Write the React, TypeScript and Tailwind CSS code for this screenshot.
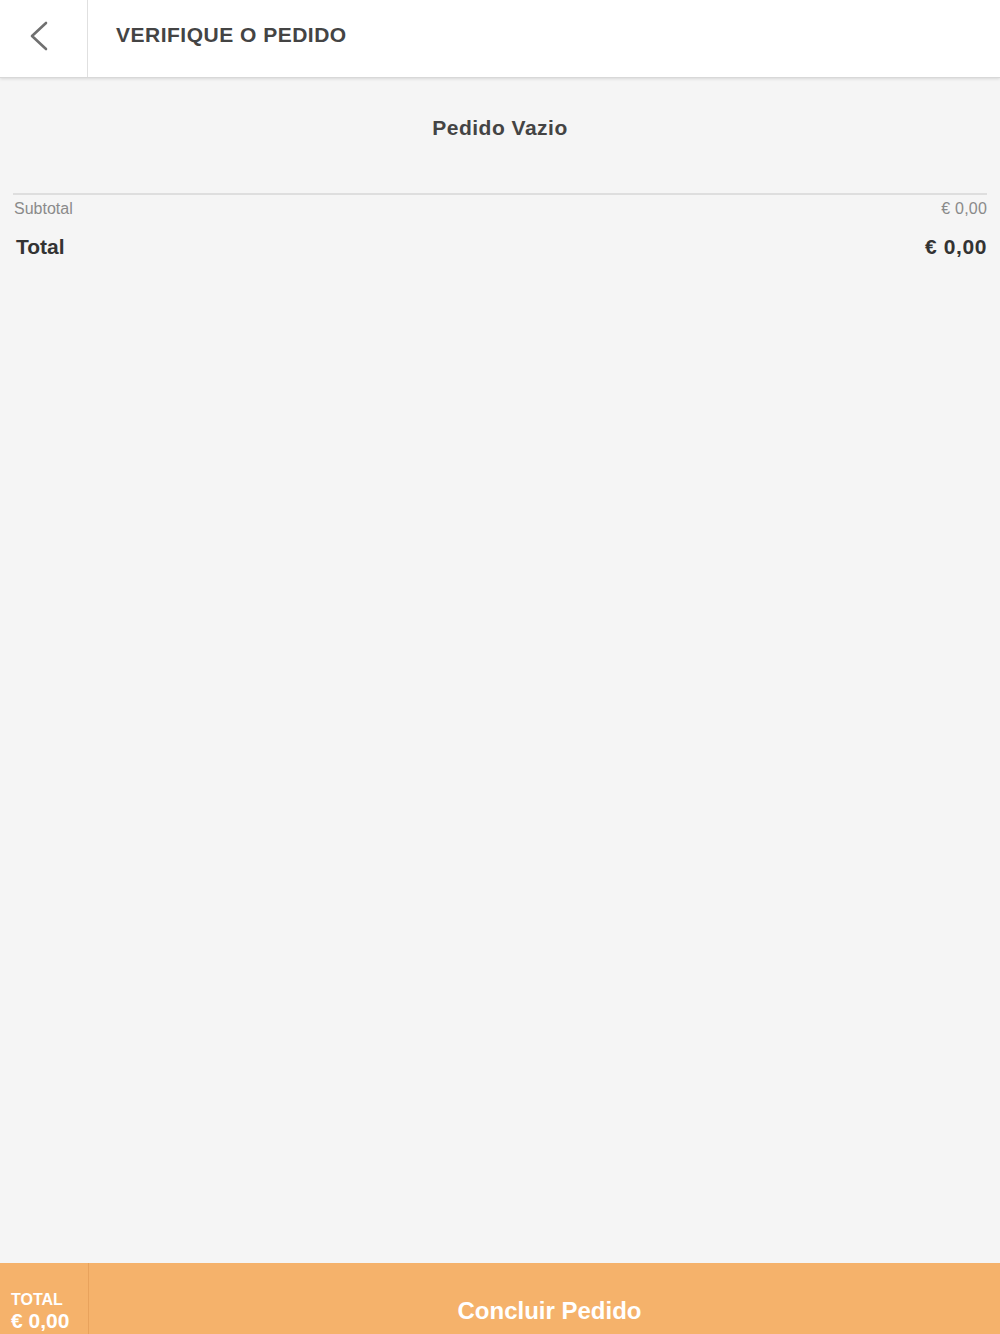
export default function App() {
  return (
    <div className="flex h-[1334px] flex-col bg-[#f5f5f5] font-['Liberation_Sans',Arial,sans-serif]">
      <header className="flex h-[78px] shrink-0 items-stretch border-b border-[#d8d8d8] bg-white shadow-[0_1px_3px_rgba(0,0,0,0.12)]">
        <button className="flex w-[88px] items-center justify-center border-r border-[#e0e0e0]" type="button">
          <svg width="22" height="32" viewBox="0 0 22 32" className="-ml-[10px] -mt-[6px]">
            <polyline points="18,3 4,16 18,29" fill="none" stroke="#707070" strokeWidth="2.6" strokeLinecap="round" strokeLinejoin="round" />
          </svg>
        </button>
        <h1 className="flex items-center pl-[28px] pb-[7px] text-[21px] font-bold tracking-[0.5px] text-[#444]">
          VERIFIQUE O PEDIDO
        </h1>
      </header>

      <main className="flex-1 px-[13px]">
        <p className="pt-[34px] text-center text-[21px] font-bold tracking-[0.5px] text-[#444]">Pedido Vazio</p>
        <div className="mt-[49px] border-t-2 border-[#dedede]" />
        <div className="flex justify-between pt-[4px] text-[16px] leading-[20px] text-[#8a8a8a]">
          <span className="pl-[1px]">Subtotal</span>
          <span className="tracking-[0.2px]">€ 0,00</span>
        </div>
        <div className="flex justify-between pt-[16px] text-[21px] font-bold leading-[24px] text-[#333]">
          <span className="pl-[3px]">Total</span>
          <span className="tracking-[0.6px]">€ 0,00</span>
        </div>
      </main>

      <footer className="flex h-[71px] shrink-0 bg-[#f5b26b] text-white">
        <div className="flex w-[89px] flex-col justify-end border-r border-[#e8a25c] pb-[1px] pl-[11px] font-bold">
          <span className="text-[16px] leading-[18px]">TOTAL</span>
          <span className="text-[21px] leading-[24px]">€ 0,00</span>
        </div>
        <button className="flex flex-1 items-center justify-center pl-[10px] pt-[24px] text-[24px] font-bold" type="button">
          Concluir Pedido
        </button>
      </footer>
    </div>
  )
}
